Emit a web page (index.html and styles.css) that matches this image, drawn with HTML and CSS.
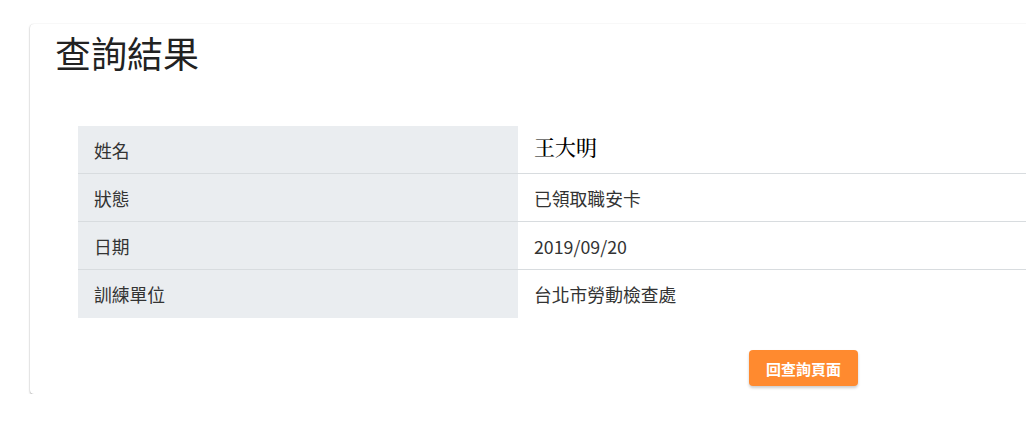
FILE: index.html
```html
<!DOCTYPE html>
<html lang="zh-Hant">
<head>
<meta charset="utf-8">
<link rel="stylesheet" href="styles.css">
</head>
<body>
<div class="card">
  <h1 class="title">查詢結果</h1>
  <table class="result">
    <tr><th>姓名</th><td class="name">王大明</td></tr>
    <tr><th>狀態</th><td>已領取職安卡</td></tr>
    <tr><th>日期</th><td>2019/09/20</td></tr>
    <tr><th>訓練單位</th><td>台北市勞動檢查處</td></tr>
  </table>
  <div class="actions">
    <button class="back">回查詢頁面</button>
  </div>
</div>
</body>
</html>
```
FILE: styles.css
```css
html, body {
  margin: 0;
  padding: 0;
  overflow: hidden;
  background: #fff;
}
body {
  font-family: "Noto Sans CJK TC", "Noto Sans", sans-serif;
  color: #333;
  padding: 24px 0 0 30px;
  width: 1200px;
}
.card {
  width: 1000px;
  background: #fff;
  border-radius: 4px;
  box-shadow: 0 1px 2px rgba(0,0,0,0.35), 0 0 1px rgba(0,0,0,0.12);
  padding: 4px 0 8px 25px;
}
.title {
  margin: 0;
  font-size: 36px;
  font-weight: 400;
  line-height: 48px;
  color: #222;
}
.result {
  margin: 50px 0 0 23px;
  border-collapse: collapse;
  width: 950px;
  font-size: 17.8px;
}
.result th, .result td {
  padding: 12px 16px 11px;
  line-height: 24px;
  text-align: left;
  font-weight: 400;
  vertical-align: top;
  border-bottom: 1px solid #d8dcdf;
}
.result tr:last-child th, .result tr:last-child td {
  border-bottom: none;
  padding-bottom: 12px;
}
.result th {
  width: 408px;
  background: #eaedf0;
  color: #333;
}
.result td {
  color: #333;
}
.result td.name {
  font-family: "Noto Serif CJK TC", serif;
  font-size: 21px;
  font-weight: 500;
  color: #000;
  padding-top: 8px;
  padding-bottom: 15px;
}
.actions {
  margin: 32px 0 0 694px;
}
.back {
  width: 109px;
  height: 36px;
  background: #ff8a2f;
  color: #fff;
  border: none;
  border-radius: 4px;
  font-family: "Noto Sans CJK TC", sans-serif;
  font-weight: 700;
  font-size: 15px;
  box-shadow: 0 2px 3px rgba(0,0,0,0.2);
  padding: 0;
}
```
